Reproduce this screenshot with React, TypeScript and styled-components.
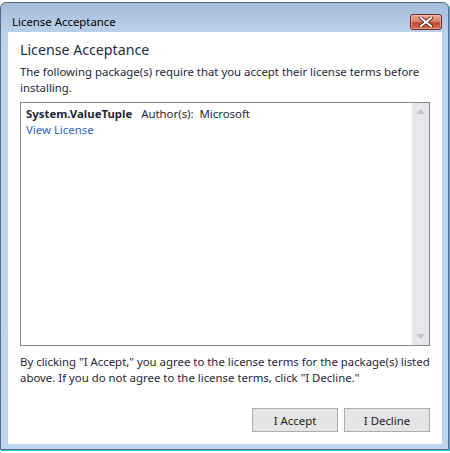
import React from "react";
import styled, { createGlobalStyle } from "styled-components";

const FONT = `"Segoe UI", "Noto Sans", "DejaVu Sans", sans-serif`;

const Global = createGlobalStyle`
  html, body { margin: 0; padding: 0; background: #ffffff; }
  body { font-family: ${FONT}; width: 450px; height: 453px; overflow: hidden; }
  * { box-sizing: border-box; }
`;

const Window = styled.div`
  width: 449px;
  height: 448px;
  margin-top: 2px;
  border: 1px solid #5b6b7e;
  border-radius: 6px 6px 0 0;
  box-shadow: 1px 1px 0 #2fc6dc;
  background: linear-gradient(to bottom, #a6bedb 0px, #b3cae6 20px, #bcd3ec 32px, #bed5ee 100%);
  display: flex;
  flex-direction: column;
`;

const TitleBar = styled.div`
  height: 29px;
  flex: none;
  display: flex;
  align-items: flex-end;
  justify-content: space-between;
  padding: 0 6px 2px 11px;
`;

const Title = styled.div`
  font-size: 11.4px;
  line-height: 16px;
  color: #000000;
`;

const CloseButton = styled.div`
  width: 32px;
  height: 16px;
  border: 1px solid #6a2b22;
  border-radius: 3px;
  background: linear-gradient(to bottom, #e8a597 0%, #d9826f 45%, #c24b35 55%, #d06a52 100%);
  box-shadow: inset 0 0 0 1px rgba(255, 220, 210, 0.45);
  display: flex;
  align-items: center;
  justify-content: center;
`;

const FrameBody = styled.div`
  flex: 1;
  display: flex;
  padding: 0 6px 5px 7px;
`;

const Client = styled.div`
  flex: 1;
  background: #ffffff;
  display: flex;
  flex-direction: column;
  padding: 8px 12px 12px 12px;
  color: #1e2638;
`;

const Heading = styled.div`
  font-size: 14.2px;
  line-height: 20px;
  color: #1f2b45;
`;

const Paragraph = styled.div<{ $gap: number }>`
  font-size: 11.4px;
  line-height: 16px;
  white-space: nowrap;
  margin-top: ${(p) => p.$gap}px;
`;

const ListBox = styled.div`
  margin-top: 6px;
  height: 244px;
  border: 1px solid #828790;
  display: flex;
`;

const ListContent = styled.div`
  flex: 1;
  padding: 3px 5px;
`;

const ItemRow = styled.div`
  font-size: 11.4px;
  line-height: 16px;
  display: flex;
  white-space: pre;
`;

const PackageName = styled.span`
  font-weight: bold;
`;

const Link = styled.span`
  font-size: 11.4px;
  line-height: 15px;
  color: #2b63c6;
  display: block;
`;

const ScrollBar = styled.div`
  width: 17px;
  background: #e8e8ec;
  display: flex;
  flex-direction: column;
  justify-content: space-between;
`;

const ArrowBox = styled.div`
  width: 17px;
  height: 17px;
  display: flex;
  align-items: center;
  justify-content: center;
`;

const ButtonRow = styled.div`
  margin-top: auto;
  display: flex;
  justify-content: flex-end;
  gap: 6px;
`;

const Button = styled.div`
  width: 86px;
  height: 24px;
  border: 1px solid #adadad;
  background: #e5e5e5;
  font-size: 11.4px;
  display: flex;
  align-items: center;
  justify-content: center;
  color: #1a1a1a;
`;

const Arrow = ({ up }: { up?: boolean }) => (
  <ArrowBox>
    <svg width="9" height="5" viewBox="0 0 9 5">
      <path d={up ? "M0 5 L4.5 0 L9 5 Z" : "M0 0 L4.5 5 L9 0 Z"} fill="#c2c3c9" />
    </svg>
  </ArrowBox>
);

export default function App() {
  return (
    <>
      <Global />
      <Window>
        <TitleBar>
          <Title>License Acceptance</Title>
          <CloseButton>
            <svg width="14" height="10" viewBox="0 0 14 10">
              <path
                d="M2 1 L12 9 M12 1 L2 9"
                stroke="#4a1a14"
                strokeWidth="3.6"
                strokeLinecap="square"
              />
              <path
                d="M2 1 L12 9 M12 1 L2 9"
                stroke="#ffffff"
                strokeWidth="2"
                strokeLinecap="square"
              />
            </svg>
          </CloseButton>
        </TitleBar>
        <FrameBody>
          <Client>
            <Heading>License Acceptance</Heading>
            <Paragraph $gap={4}>
              The following package(s) require that you accept their license terms before
              <br />
              installing.
            </Paragraph>
            <ListBox>
              <ListContent>
                <ItemRow>
                  <PackageName>System.ValueTuple</PackageName>
                  {"   Author(s):  Microsoft"}
                </ItemRow>
                <Link>View License</Link>
              </ListContent>
              <ScrollBar>
                <Arrow up />
                <Arrow />
              </ScrollBar>
            </ListBox>
            <Paragraph $gap={8}>
              By clicking "I Accept," you agree to the license terms for the package(s) listed
              <br />
              above. If you do not agree to the license terms, click "I Decline."
            </Paragraph>
            <ButtonRow>
              <Button>I Accept</Button>
              <Button>I Decline</Button>
            </ButtonRow>
          </Client>
        </FrameBody>
      </Window>
    </>
  );
}
